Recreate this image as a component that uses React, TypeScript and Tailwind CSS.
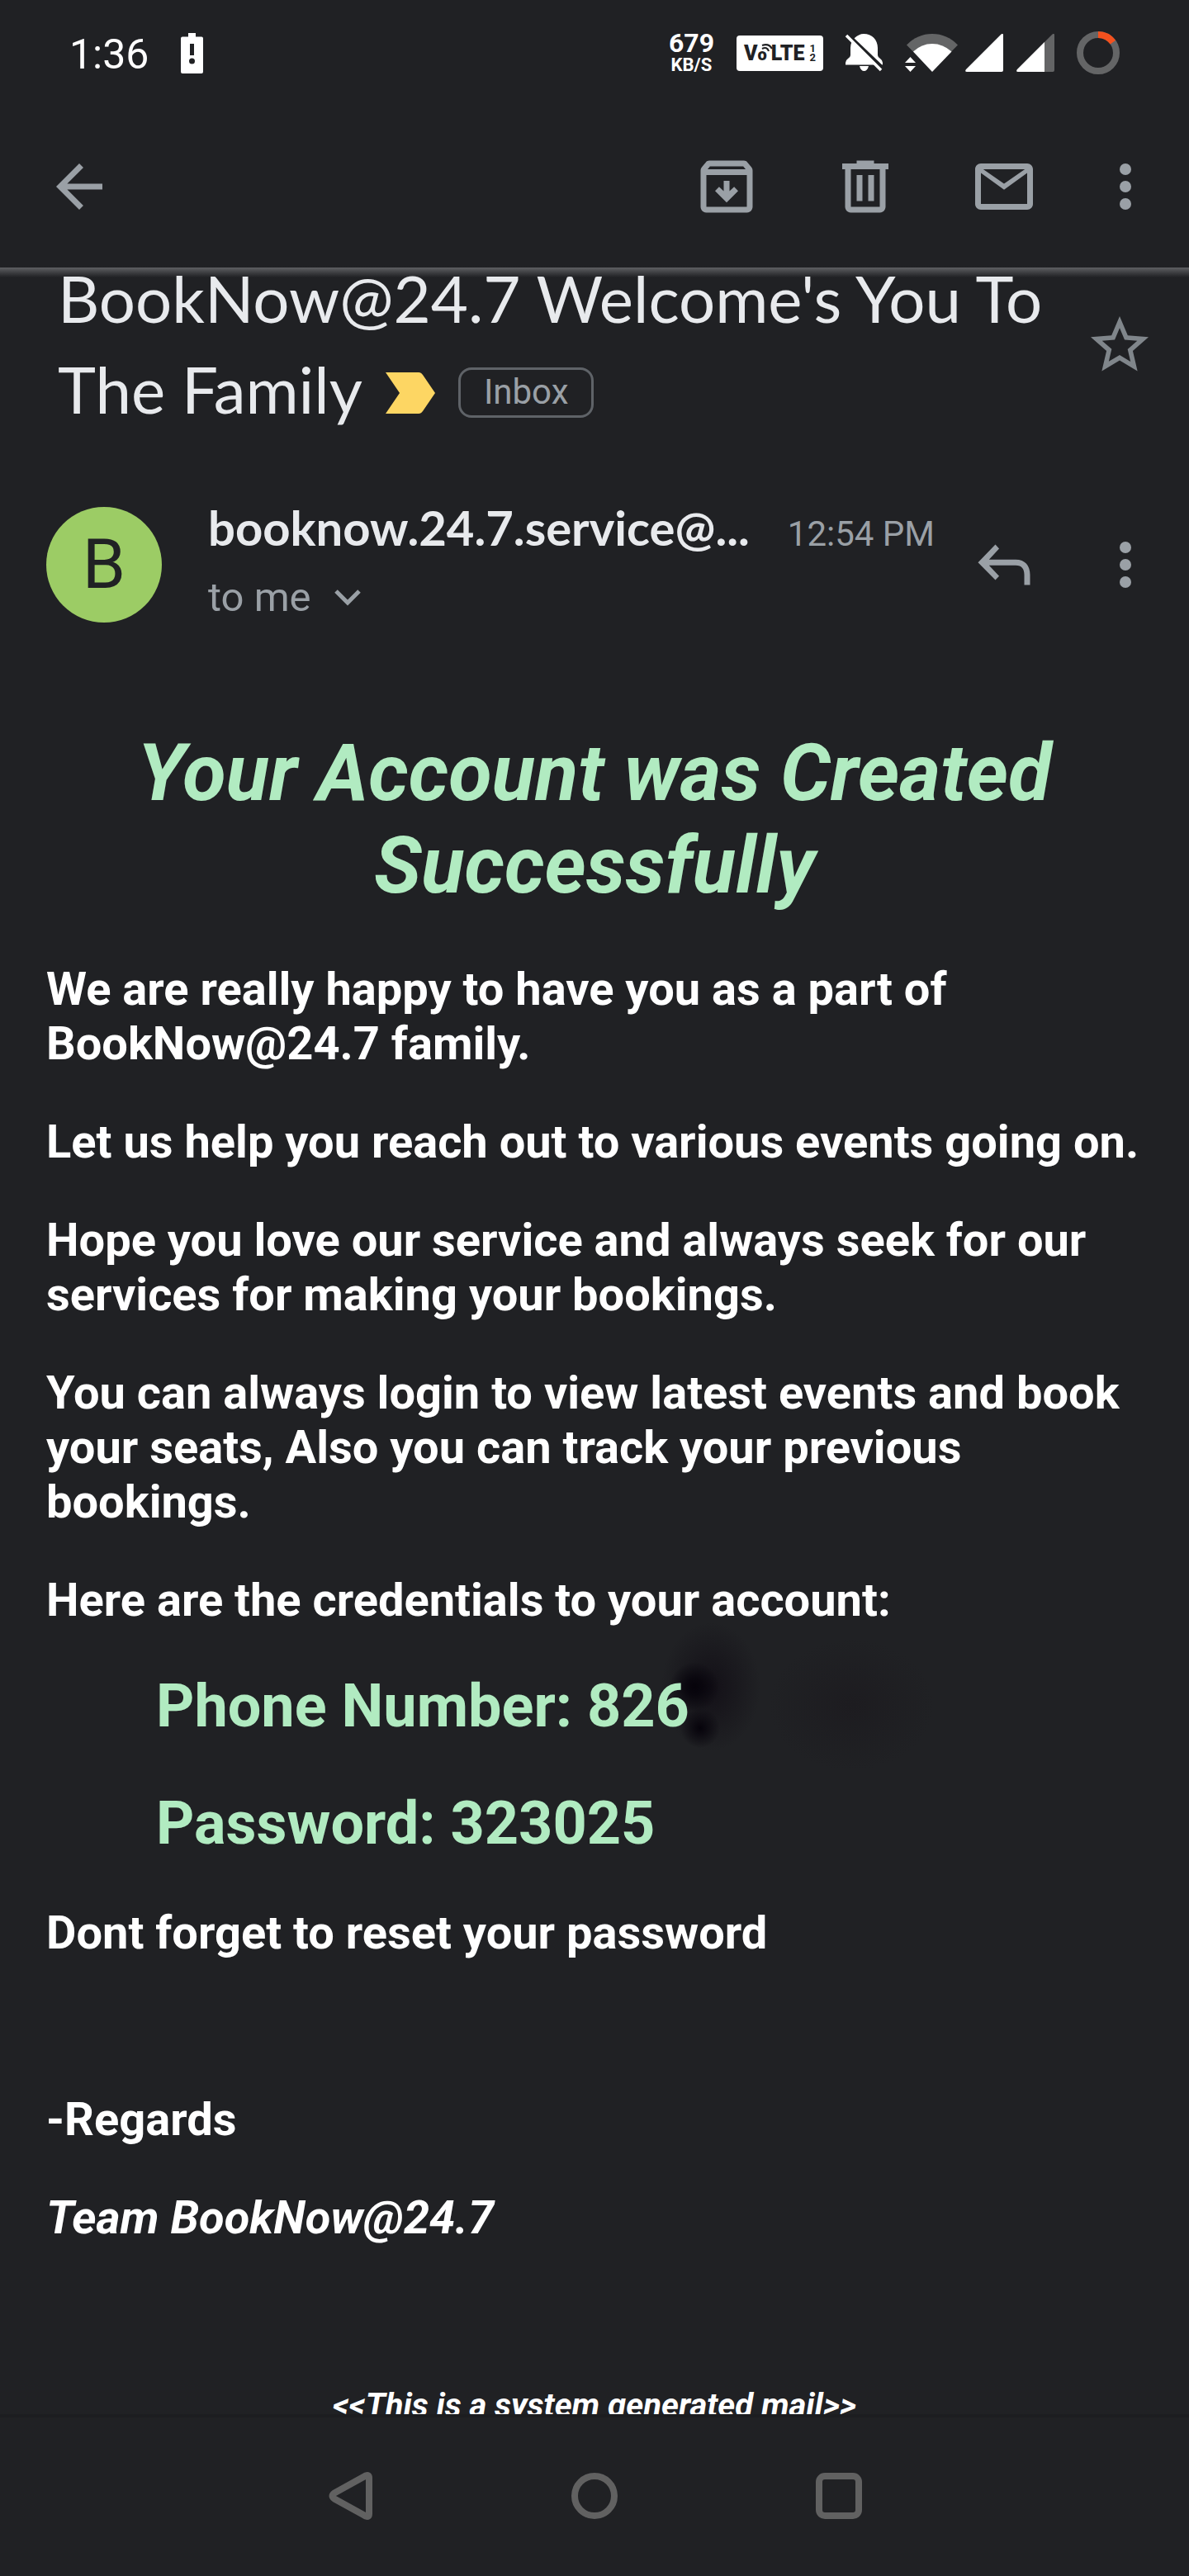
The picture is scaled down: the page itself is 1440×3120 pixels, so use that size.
import type { ReactNode } from "react";

const LETTER_PARAGRAPHS = [
  "We are really happy to have you as a part of BookNow@24.7 family.",
  "Let us help you reach out to various events going on.",
  "Hope you love our service and always seek for our services for making your bookings.",
  "You can always login to view latest events and book your seats, Also you can track your previous bookings.",
  "Here are the credentials to your account:",
];

function IconButton({ label, children }: { label: string; children: ReactNode }) {
  return (
    <button type="button" aria-label={label} className="flex size-[84px] shrink-0 items-center justify-center">
      {children}
    </button>
  );
}

function Icon({ children }: { children: ReactNode }) {
  return (
    <svg viewBox="0 0 24 24" fill="currentColor" aria-hidden="true" className="size-full">
      {children}
    </svg>
  );
}

function MoreIcon() {
  return (
    <Icon>
      <circle cx="12" cy="6" r="2" />
      <circle cx="12" cy="12" r="2" />
      <circle cx="12" cy="18" r="2" />
    </Icon>
  );
}

function StatusBar() {
  return (
    <div className="flex h-[128px] shrink-0 items-center px-[84px] text-white">
      <time className="pt-1 text-[50px] leading-[60px]">1:36</time>
      <svg viewBox="0 0 27 49" className="ml-[39px] h-[49px] w-[27px]" aria-label="Battery low">
        <path
          fill="#fff"
          fillRule="evenodd"
          d="M9 0h9v4.500h7a2 2 0 0 1 2 2V47a2 2 0 0 1-2 2H2a2 2 0 0 1-2-2V6.500a2 2 0 0 1 2-2h7zM11 13v14h5V13zM13.500 30.500a3.500 3.500 0 1 0 0 7a3.500 3.500 0 0 0 0-7z"
        />
      </svg>
      <div className="ml-auto flex items-center">
        <div className="flex flex-col items-center font-bold">
          <span className="text-[32px] leading-[30px]">679</span>
          <span className="text-[22px] leading-[24px]">KB/S</span>
        </div>
        <div className="ml-[27px] flex h-[43px] w-[105px] items-center justify-center rounded bg-white text-[#202124]">
          <span className="text-[25px] leading-none font-black">V</span>
          <span className="relative pt-1 text-[20px] leading-none font-black">
            o
            <svg viewBox="0 0 16 12" className="absolute top-0 left-1 h-3 w-4" aria-hidden="true">
              <path d="M1 3Q9 0 13 7M1 7Q7 4 9 10" fill="none" stroke="#202124" strokeWidth="2.200" />
            </svg>
          </span>
          <span className="ml-[5px] text-[25px] leading-none font-black">LTE</span>
          <span className="ml-[6px] flex flex-col text-[13px] leading-[11px] font-bold">
            <span>1</span>
            <span>2</span>
          </span>
        </div>
        <svg viewBox="0 0 46 46" className="ml-[26px] size-[46px]" aria-label="Notifications muted">
          <path
            fill="#fff"
            d="M12 5C15 2 19 0 23 0C33 0 40 7 40 17V26Q40 28 43 30Q46 32 46 35V37.500H1V35Q1 32 4 30Q7 28 7 26V17Q7 13 8.500 10ZM18 39H29C28 43 26 45 23.500 45S19 43 18 39Z"
          />
          <path d="M3 0L48 43" stroke="#202124" strokeWidth="4" />
          <path d="M2 2L44 44" stroke="#fff" strokeWidth="3.500" />
        </svg>
        <svg viewBox="0 0 65 46" className="ml-[27px] h-[46px] w-[65px]" aria-label="Wi-Fi">
          <path fill="#646566" d="M2 13.500Q15 0 33 0T64 13.500L33 45Z" />
          <path fill="#fff" d="M10 21.500Q20 12 33 12T56.500 21.500L33 46Z" />
          <path fill="#fff" d="M0 35L6.500 28L13 35ZM0 39H13L6.500 46Z" />
        </svg>
        <svg viewBox="0 0 46 46" className="ml-[8px] size-[46px]" aria-label="Signal, line one">
          <path fill="#fff" d="M43 1Q46 -2 46 2V44Q46 46 44 46H2Q-1 46 1 43Z" />
        </svg>
        <svg viewBox="0 0 46 46" className="ml-[16px] size-[46px]" aria-label="Signal, line two">
          <path fill="#646566" d="M43 1Q46 -2 46 2V44Q46 46 44 46H2Q-1 46 1 43Z" />
          <path fill="#fff" d="M34 10V46H2Q-1 46 1 43Z" />
        </svg>
        <svg viewBox="0 0 52 52" fill="none" strokeWidth="8" className="ml-[27px] size-[52px]" aria-label="Battery level">
          <circle cx="26" cy="26" r="22" stroke="#646566" />
          <path d="M26 4A22 22 0 0 1 43.900 13.200" stroke="#f4511e" />
        </svg>
      </div>
    </div>
  );
}

function Toolbar() {
  return (
    <nav className="flex h-[196px] shrink-0 items-center pr-[35px] pl-[54px] text-[#9aa0a6]">
      <IconButton label="Back">
        <Icon>
          <path d="M20 11H7.830l5.590-5.590L12 4l-8 8 8 8 1.410-1.410L7.830 13H20z" />
        </Icon>
      </IconButton>
      <div className="ml-auto flex items-center gap-[84px]">
        <IconButton label="Archive">
          <Icon>
            <path
              fillRule="evenodd"
              d="M20.540 5.230l-1.390-1.680C18.880 3.210 18.470 3 18 3H6c-.470 0-.880.210-1.160.550L3.460 5.230C3.170 5.570 3 6.020 3 6.500V19c0 1.100.900 2 2 2h14c1.100 0 2-.900 2-2V6.500c0-.480-.170-.930-.460-1.270zM6.240 5h11.520l.830 1H5.420zM5 19V8h14v11z"
            />
            <path d="M11 10h2v3.600l1.600-1.500 1.400 1.400-4 4-4-4 1.400-1.400 1.600 1.500z" />
          </Icon>
        </IconButton>
        <IconButton label="Delete">
          <Icon>
            <path
              fillRule="evenodd"
              d="M15 4V3H9v1H4v2h1v13c0 1.100.900 2 2 2h10c1.100 0 2-.900 2-2V6h1V4zM17 19H7V6h10zM9 8v9h2V8zM13 8v9h2V8z"
            />
          </Icon>
        </IconButton>
        <IconButton label="Mark as unread">
          <Icon>
            <path
              fillRule="evenodd"
              d="M20 4H4c-1.100 0-2 .900-2 2v12c0 1.100.900 2 2 2h16c1.100 0 2-.900 2-2V6c0-1.100-.900-2-2-2zM19.200 6L12 11 4.800 6zM20 18H4V7.300l8 5.800 8-5.800z"
            />
          </Icon>
        </IconButton>
      </div>
      <div className="ml-[63px]">
        <IconButton label="More options">
          <MoreIcon />
        </IconButton>
      </div>
    </nav>
  );
}

function Subject() {
  return (
    <div className="flex items-center pr-[42px] pl-[70px]">
      <h1 className="min-w-0 flex-1 font-['Lato',sans-serif] text-[78px] leading-[110px] text-[#e8eaed]">
        BookNow@24.7 Welcome's You To The Family
        <svg viewBox="0 0 60 50" className="ml-7 inline-block h-[50px] w-[60px] align-baseline" aria-label="Important">
          <path fill="#fdd663" d="M0 0H40Q43 0 45 3L60 25L45 47Q43 50 40 50H0L17 25Z" />
        </svg>
        <button
          type="button"
          className="ml-7 inline-flex h-[61px] items-center rounded-2xl border-3 border-[#5f6368] px-[28px] align-[12px] font-['Roboto',sans-serif] text-[42px] leading-none text-[#9aa0a6]"
        >
          Inbox
        </button>
      </h1>
      <div className="pt-1 text-[#80868b]">
        <IconButton label="Star">
          <Icon>
            <path d="M22 9.240l-7.190-.620L12 2 9.190 8.630 2 9.240l5.460 4.730L5.820 21 12 17.270 18.180 21l-1.630-7.030L22 9.240zM12 15.400l-3.760 2.270 1-4.280-3.320-2.880 4.380-.380L12 6.100l1.710 4.040 4.380.380-3.320 2.880 1 4.280L12 15.400z" />
          </Icon>
        </IconButton>
      </div>
    </div>
  );
}

function Sender() {
  return (
    <div className="mt-[78px] flex items-center pr-[35px] pl-[56px] text-[#9aa0a6]">
      <div className="flex size-[140px] shrink-0 items-center justify-center rounded-full bg-[#9ccc65] text-[84px] leading-none text-[#202124]">
        B
      </div>
      <div className="ml-[56px] min-w-0 flex-1">
        <div className="flex items-baseline">
          <span className="min-w-0 flex-1 truncate font-['Lato',sans-serif] text-[58px] leading-[70px] font-bold text-[#e8eaed]">
            booknow.24.7.service@...
          </span>
          <time className="ml-[42px] shrink-0 text-[42px] leading-[63px]">12:54 PM</time>
        </div>
        <button type="button" className="mt-[7px] flex items-center gap-[28px] text-[49px] leading-[78px]">
          to me
          <svg viewBox="0 0 32 20" className="h-5 w-8" aria-hidden="true">
            <path d="M2 2L16 16L30 2" fill="none" stroke="currentColor" strokeWidth="5" />
          </svg>
        </button>
      </div>
      <div className="ml-[42px]">
        <IconButton label="Reply">
          <Icon>
            <path d="M9 5L3 11.200L9 17.300L10.300 15.900L6.800 12.200H16C18.200 12.200 19 13.500 19 15.500V19H21V15.500C21 12.300 19.300 10.200 16 10.200H6.800L10.300 6.400Z" />
          </Icon>
        </IconButton>
      </div>
      <div className="ml-[63px]">
        <IconButton label="More message options">
          <MoreIcon />
        </IconButton>
      </div>
    </div>
  );
}

function Letter() {
  return (
    <article className="mt-[117px] px-[56px] text-[56px] leading-[66px] font-bold text-white">
      <h2 className="text-center text-[96px] leading-[112px] text-[#b1ebc1] italic">Your Account was Created Successfully</h2>
      <div className="mt-[61px] flex flex-col gap-[53px]">
        {LETTER_PARAGRAPHS.map((text) => (
          <p key={text}>{text}</p>
        ))}
      </div>
      <div className="mt-[54px] flex flex-col gap-[58px] pl-[133px] text-[72px] leading-[84px] text-[#b1ebc1]">
        <p className="isolate">
          Phone Number: 826
          <span className="relative -z-10 inline-block" aria-hidden="true">
            <span className="absolute top-[-126px] left-[-34px] h-[200px] w-[340px] bg-[radial-gradient(circle_at_40px_78px,#06030b_0,#06030bcc_10px,transparent_30px),radial-gradient(circle_at_47px_128px,#06030b_0,#06030bcc_5px,transparent_24px),radial-gradient(ellipse_60px_78px_at_60px_78px,#131017,transparent),radial-gradient(ellipse_100px_80px_at_230px_100px,#1d1c20,transparent)]" />
          </span>
        </p>
        <p>Password: 323025</p>
      </div>
      <p className="mt-[57px]">Dont forget to reset your password</p>
      <p className="mt-[160px]">-Regards</p>
      <p className="mt-[53px] italic">Team BookNow@24.7</p>
      <p className="mt-[170px] text-center text-[40px] leading-[50px] italic">&lt;&lt;This is a system generated mail&gt;&gt;</p>
    </article>
  );
}

function NavigationBar() {
  return (
    <nav className="flex h-[196px] shrink-0 items-center justify-center gap-[232px] border-t-4 border-[#1c1d20] pb-0.5 text-[#616161]">
      <button type="button" aria-label="System back">
        <svg viewBox="0 0 64 64" className="size-16" aria-hidden="true">
          <path d="M13 28.500L51 7.500Q55 6 55 10V54Q55 58 51 56.500L13 35.500Q8 32 13 28.500Z" fill="none" stroke="currentColor" strokeWidth="8" />
        </svg>
      </button>
      <button type="button" aria-label="Home">
        <svg viewBox="0 0 64 64" className="size-16" aria-hidden="true">
          <circle cx="32" cy="32" r="24" fill="none" stroke="currentColor" strokeWidth="8" />
        </svg>
      </button>
      <button type="button" aria-label="Recent apps">
        <svg viewBox="0 0 64 64" className="size-16" aria-hidden="true">
          <rect x="8" y="8" width="48" height="48" rx="7" fill="none" stroke="currentColor" strokeWidth="8" />
        </svg>
      </button>
    </nav>
  );
}

export default function App() {
  return (
    <div className="flex h-screen flex-col overflow-hidden bg-[#202124] font-['Roboto',sans-serif]">
      <StatusBar />
      <Toolbar />
      <div className="-mb-3 h-3 shrink-0 bg-linear-to-b from-[#5f6063] to-[#202124]" />
      <main className="min-h-0 flex-1 overflow-hidden">
        <div className="-mt-[18px]">
          <Subject />
          <Sender />
          <Letter />
        </div>
      </main>
      <NavigationBar />
    </div>
  );
}
